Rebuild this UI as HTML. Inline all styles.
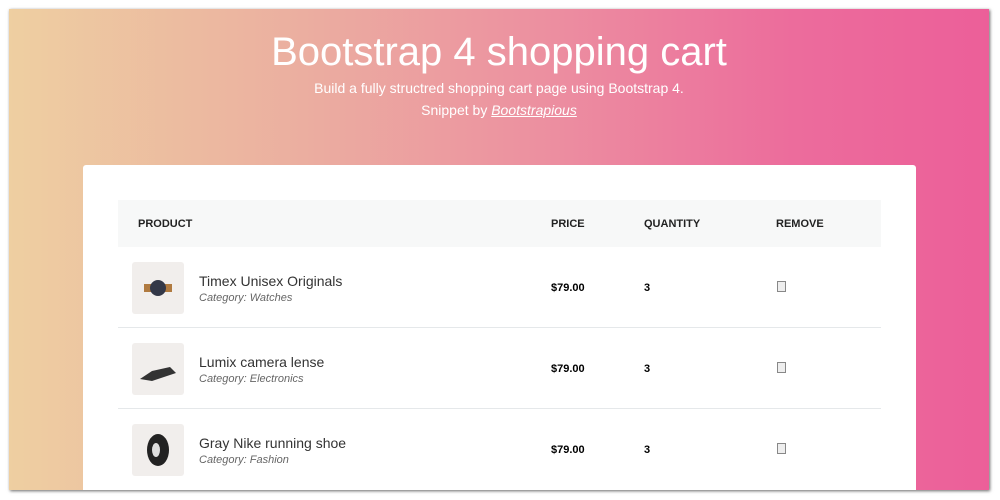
<!DOCTYPE html>
<html><head><style>
body{margin:0;width:1000px;height:500px;background:#fff;overflow:hidden;font-family:"Liberation Sans",sans-serif;}
.frame{position:absolute;left:9px;top:9px;width:980px;height:481px;background:linear-gradient(to right,#eecfa1 0%,#ebaea0 30%,#ec8fa0 55%,#ec6c9c 80%,#ec5f99 100%);box-shadow:1px 1px 3px rgba(0,0,0,.6);overflow:hidden}
h1{position:absolute;top:21px;left:0;width:980px;text-align:center;margin:0;color:#fff;font-weight:300;font-size:40px;}
.sub{position:absolute;top:68px;width:980px;text-align:center;color:#fff;font-size:14px;line-height:22px}
.sub i{text-decoration:underline}
.card{position:absolute;left:74px;top:156px;width:833px;height:340px;background:#fff;border-radius:3px}
.th{position:absolute;left:35px;top:35px;width:763px;height:47px;background:#f7f8f8;font-size:11px;font-weight:bold;color:#222}
.th span,.row span{position:absolute}
.row{position:absolute;left:35px;width:763px;height:80px;border-top:1px solid #e5e8ea}
.img{position:absolute;left:14px;top:15px;width:52px;height:52px;background:#f1eeec;border-radius:3px}
.name{left:81px;top:26px;font-size:14px;color:#333}
.cat{left:81px;top:45px;font-size:11px;color:#666;font-style:italic}
.p{left:433px;top:35px;font-size:11px;font-weight:bold}
.q{left:526px;top:35px;font-size:11px;font-weight:bold}
.x{left:659px;top:34px;width:7px;height:9px;border:1px solid #888;background:#eee}
</style></head><body>
<div class="frame">
<h1>Bootstrap 4 shopping cart</h1>
<div class="sub">Build a fully structred shopping cart page using Bootstrap 4.<br>Snippet by <i>Bootstrapious</i></div>
<div class="card">
<div class="th"><span style="left:20px;top:18px">PRODUCT</span><span style="left:433px;top:18px">PRICE</span><span style="left:526px;top:18px">QUANTITY</span><span style="left:658px;top:18px">REMOVE</span></div>
<div class="row" style="top:82px;border-top:none"><div class="img"><svg width="52" height="52"><rect x="12" y="22" width="28" height="8" fill="#b07a40"/><circle cx="26" cy="26" r="8" fill="#333848"/></svg></div><span class="name">Timex Unisex Originals</span><span class="cat">Category: Watches</span><span class="p">$79.00</span><span class="q">3</span><span class="x"></span></div>
<div class="row" style="top:162px"><div class="img"><svg width="52" height="52"><path d="M8 36 L20 28 L38 24 L44 30 L20 38 Z" fill="#333"/></svg></div><span class="name">Lumix camera lense</span><span class="cat">Category: Electronics</span><span class="p">$79.00</span><span class="q">3</span><span class="x"></span></div>
<div class="row" style="top:243px"><div class="img"><svg width="52" height="52"><ellipse cx="26" cy="26" rx="11" ry="16" fill="#222"/><ellipse cx="24" cy="26" rx="4" ry="7" fill="#ddd"/></svg></div><span class="name">Gray Nike running shoe</span><span class="cat">Category: Fashion</span><span class="p">$79.00</span><span class="q">3</span><span class="x"></span></div>
</div>
</div>
</body></html>
